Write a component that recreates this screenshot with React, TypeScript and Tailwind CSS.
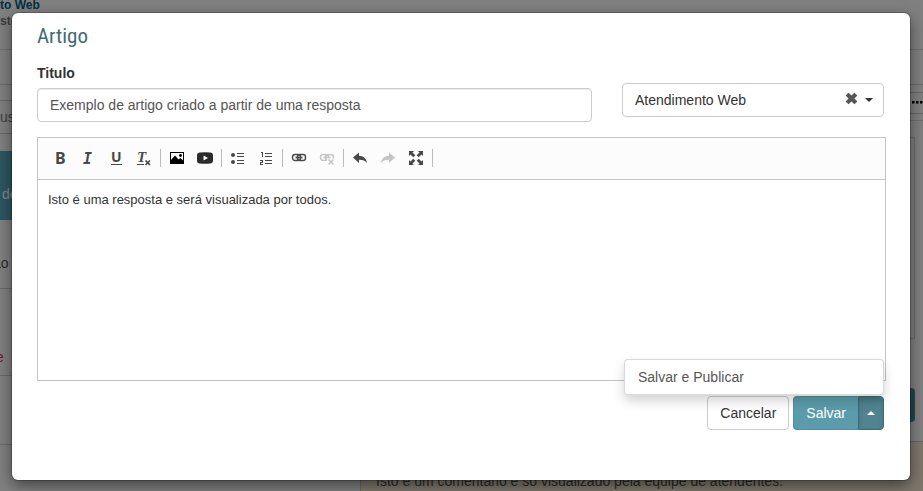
import React, { useState } from "react";

type ToolProps = { label: string; disabled?: boolean; children: React.ReactNode };

function Tool({ label, disabled, children }: ToolProps) {
  return (
    <button
      type="button"
      title={label}
      aria-label={label}
      disabled={disabled}
      className="flex h-7 w-7 items-center justify-center text-[#484848] disabled:text-[#c4c4c4]"
    >
      <svg width="16" height="16" viewBox="0 0 16 16" fill="currentColor" overflow="visible" aria-hidden="true">
        {children}
      </svg>
    </button>
  );
}

function Separator() {
  return <span className="mx-0.5 h-[18px] w-px bg-[#bcbcbc]" />;
}

const linkShape = (
  <g fill="none" stroke="currentColor">
    <rect x="1.500" y="4.500" width="8" height="6" rx="2.600" strokeWidth="1.400" />
    <rect x="6.500" y="4.500" width="8" height="6" rx="2.600" strokeWidth="1.400" />
    <path d="M4.500 7.500h7" strokeWidth="1.600" />
  </g>
);

function Toolbar() {
  return (
    <div role="toolbar" aria-label="Formatação" className="flex h-[42px] items-center border-b border-[#c4c4c4] bg-[#fcfcfc] px-2 pb-px">
      <Tool label="Negrito">
        <text x="3" y="14" fontSize="16" fontWeight="700" fontFamily="'Noto Sans', sans-serif">B</text>
      </Tool>
      <Tool label="Itálico">
        <text x="3" y="14" fontSize="15" fontWeight="700" fontStyle="italic" fontFamily="'DejaVu Sans Mono', monospace">I</text>
      </Tool>
      <Tool label="Sublinhado">
        <text x="3" y="12" fontSize="14" fontWeight="700" fontFamily="'Noto Sans', sans-serif">U</text>
        <path d="M3 14h11v1H3z" />
      </Tool>
      <Tool label="Remover formatação">
        <text x="1" y="12" fontSize="15" fontWeight="700" fontStyle="italic" fontFamily="'Liberation Serif', serif">T</text>
        <path d="M1 14h7v1H1z" />
        <path d="M9.500 10.500l4.500 4.500M14 10.500l-4.500 4.500" stroke="currentColor" strokeWidth="1.700" />
      </Tool>
      <Separator />
      <Tool label="Imagem">
        <path fill="#000" fillRule="evenodd" d="M1 2h14v12H1zM2 3v10h12V3z" />
        <path fill="#000" d="M2 13V10l4-4.500 3.500 4 2-1.500L14 10.500V13z" />
        <circle cx="11.500" cy="5.500" r="1.400" fill="#000" />
      </Tool>
      <Tool label="Vídeo">
        <path fill="#2b2b2b" fillRule="evenodd" d="M3 2.500Q8 2 13 2.500Q16 2.500 16 5.500V10.500Q16 13.500 13 13.500Q8 14 3 13.500Q0 13.500 0 10.500V5.500Q0 2.500 3 2.500zM6.500 5.500v5l4.500-2.500z" />
      </Tool>
      <Separator />
      <Tool label="Lista com marcadores">
        <circle cx="3" cy="5" r="2" />
        <circle cx="3" cy="12" r="2" />
        <path d="M7 3h7v1H7zM7 6h7v1H7zM7 10h7v1H7zM7 13h7v1H7z" />
      </Tool>
      <Tool label="Lista numerada">
        <path d="M3 2h2v5H4V3H3zM2 10h3v3H3v1h2v1H2v-3h2v-1H2z" />
        <path d="M7 3h7v1H7zM7 6h7v1H7zM7 10h7v1H7zM7 13h7v1H7z" />
      </Tool>
      <Separator />
      <Tool label="Inserir link">{linkShape}</Tool>
      <Tool label="Remover link" disabled>
        <mask id="cut">
          <rect width="16" height="16" fill="#fff" />
          <rect x="8" y="8.500" width="8" height="8" fill="#000" />
        </mask>
        <g mask="url(#cut)">{linkShape}</g>
        <path d="M9.500 9.500l5 5M14.500 9.500l-5 5" stroke="currentColor" strokeWidth="1.600" />
      </Tool>
      <Separator />
      <Tool label="Desfazer">
        <path d="M1 7.500L7 2.500v3.300c4 .2 7.300 2 8 7.200-2-2.800-4.500-3.400-8-3.300v3.300z" />
      </Tool>
      <Tool label="Refazer" disabled>
        <path d="M15 7.500L9 2.500v3.300c-4 .2-7.300 2-8 7.200 2-2.800 4.500-3.400 8-3.300v3.300z" />
      </Tool>
      <Tool label="Maximizar">
        <path d="M1 1h5L4.500 2.500l2.800 2.800-2 2L2.500 4.500 1 6zM15 1v5l-1.500-1.500-2.800 2.800-2-2 2.800-2.800L10 1zM1 15v-5l1.500 1.500 2.800-2.800 2 2-2.800 2.800L6 15zM15 15h-5l1.500-1.500-2.800-2.800 2-2 2.800 2.800L15 10z" />
      </Tool>
      <Separator />
    </div>
  );
}

function BackgroundPage() {
  return (
    <div aria-hidden="true" className="flex h-screen flex-col overflow-hidden bg-[#808080] text-sm text-[#2a2a2a]">
      <header className="h-[50px] shrink-0 border-b border-[#6e6e6e] text-xs font-bold">
        <p className="leading-[10px] text-[#00313f]">to Web</p>
        <p className="leading-[22px] text-[#3c3c3c]">ste</p>
      </header>
      <div className="h-[35px] shrink-0 border-b border-[#6a6a6a]" />
      <div className="flex flex-1">
        <aside className="flex w-[360px] shrink-0 flex-col">
          <div className="mt-[15px] h-[34px] border-y border-[#666666] leading-8 text-[#404040]">us</div>
          <div className="mt-[17px] h-[69px] bg-[#2e5761] pt-[33px] pl-0.5 leading-5 text-[#7c8f93]">de</div>
          <div className="h-[69px] border-b border-[#6a6a6a] pt-[33px] leading-5">
            <span className="-ml-[7px]">ão</span>
          </div>
          <div className="h-[87px] border-b border-[#6a6a6a] pt-[58px] leading-5 text-[#7a1626]">
            <span className="-ml-1">e</span>
          </div>
          <div className="h-[69px] border-b border-[#6a6a6a]" />
        </aside>
        <section className="flex flex-1 flex-col">
          <div className="flex h-9 items-center justify-end border-b border-[#707070]">
            <span className="flex h-[22px] w-[30px] items-center justify-end border-y border-[#666666] text-black">
              <svg width="11" height="3" viewBox="0 0 11 3" fill="currentColor">
                <path d="M0 0h2.500v2.500H0zM4 0h2.500v2.500H4zM8 0h2.500v2.500H8z" />
              </svg>
            </span>
          </div>
          <div className="mt-4 mr-2 h-[202px] border border-[#6a6a6a]" />
          <div className="mt-[49px] mr-2 h-[34px] w-24 self-end rounded bg-[#28464e]" />
          <div className="mt-[19px] flex-1 border-t border-l border-[#6c675c] bg-[#7e786b] pt-[29px] pl-[15px] leading-5">
            Isto é um comentário e só visualizado pela equipe de atendentes.
          </div>
        </section>
      </div>
    </div>
  );
}

export default function App() {
  const [title, setTitle] = useState("Exemplo de artigo criado a partir de uma resposta");
  const [body, setBody] = useState("Isto é uma resposta e será visualizada por todos.");
  return (
    <div className="relative font-['Liberation_Sans',Arial,sans-serif]">
      <BackgroundPage />
      <div className="absolute inset-0 pt-[13px] pr-[13px] pl-3">
        <form
          role="dialog"
          aria-labelledby="dialog-title"
          onSubmit={(e) => e.preventDefault()}
          className="rounded-md bg-white pt-2 pr-6 pb-[50px] pl-[25px] text-sm text-[#333333] shadow-[0_5px_15px_rgba(0,0,0,0.5),0_0_0_1px_rgba(0,0,0,0.2)]"
        >
          <h1 id="dialog-title" className="font-['Roboto_Condensed',Roboto,sans-serif] text-[21px] leading-[30px] text-[#3f6b76]">
            Artigo
          </h1>
          <div className="mt-3 flex items-start gap-[30px] pr-0.5">
            <div className="flex-1">
              <label htmlFor="title" className="block leading-5 font-bold">Titulo</label>
              <input
                id="title"
                value={title}
                onChange={(e) => setTitle(e.target.value)}
                className="mt-[5px] h-[34px] w-full rounded border border-[#cccccc] px-3 text-[#555555] shadow-[inset_0_1px_1px_rgba(0,0,0,0.075)] outline-none"
              />
            </div>
            <div className="relative mt-5 w-[262px]">
              <select
                aria-label="Categoria"
                className="h-[34px] w-full appearance-none rounded border border-[#cccccc] bg-white px-3 outline-none"
              >
                <option>Atendimento Web</option>
              </select>
              <button type="button" aria-label="Limpar" className="absolute top-[9px] right-[26px] text-[#555555]">
                <svg width="13" height="13" viewBox="0 0 12 12" fill="currentColor">
                  <path d="M3.300 .6L6 3.300 8.700 .6l2.700 2.700L8.700 6l2.700 2.700-2.700 2.700L6 8.700l-2.700 2.700L.6 8.700 3.300 6 .6 3.300z" />
                </svg>
              </button>
              <span className="pointer-events-none absolute top-[15px] right-[11px] border-x-4 border-t-4 border-x-transparent border-t-[#333333]" />
            </div>
          </div>
          <div className="mt-[15px] border border-[#c4c4c4]">
            <Toolbar />
            <textarea
              aria-label="Texto do artigo"
              value={body}
              onChange={(e) => setBody(e.target.value)}
              className="block h-[200px] w-full resize-none px-2.5 py-2.5 text-[13px] leading-5 outline-none"
            />
          </div>
          <div className="relative mt-[15px] flex justify-end gap-1 pr-0.5">
            <ul role="menu" className="absolute right-0.5 bottom-full mb-px w-[260px] rounded border border-black/15 bg-white py-[7px] shadow-[0_6px_12px_rgba(0,0,0,0.175)]">
              <li role="none">
                <button type="button" role="menuitem" className="block w-full px-[13px] text-left leading-5 text-[#555555]">
                  Salvar e Publicar
                </button>
              </li>
            </ul>
            <button type="button" className="h-[34px] rounded border border-[#cccccc] bg-white px-3">Cancelar</button>
            <div className="flex h-[34px] text-white">
              <button type="submit" className="rounded-l border border-r-0 border-[#528c9a] bg-[#5b9bab] px-3">Salvar</button>
              <button
                type="button"
                aria-label="Mais opções"
                aria-haspopup="menu"
                aria-expanded="true"
                className="flex w-[26px] items-center justify-center rounded-r border border-[#3c6974] bg-[#508491] shadow-[inset_0_3px_5px_rgba(0,0,0,0.125)]"
              >
                <span className="border-x-4 border-b-4 border-x-transparent border-b-white" />
              </button>
            </div>
          </div>
        </form>
      </div>
    </div>
  );
}
